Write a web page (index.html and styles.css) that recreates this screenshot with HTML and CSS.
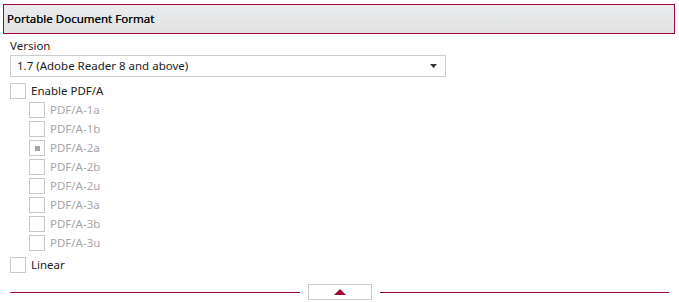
FILE: index.html
```html
<!DOCTYPE html>
<html lang="en">
<head>
    <meta charset="UTF-8">
    <meta name="viewport" content="width=device-width, initial-scale=1.0">
    <title>Portable Document Format</title>
    <link rel="stylesheet" href="styles.css">
</head>
<body>
    <section class="panel">
        <header class="panel-header">Portable Document Format</header>
        <div class="panel-body">
            <label class="field-label">Version</label>
            <div class="select">
                <span>1.7 (Adobe Reader 8 and above)</span>
                <svg class="select-arrow" width="7" height="4" viewBox="0 0 7 4"><path d="M0 0h7L3.5 4z" fill="#333"/></svg>
            </div>
            <div class="check">
                <span class="box"></span>
                <span>Enable PDF/A</span>
            </div>
            <div class="sub-checks">
                <div class="check disabled"><span class="box"></span><span>PDF/A-1a</span></div>
                <div class="check disabled"><span class="box"></span><span>PDF/A-1b</span></div>
                <div class="check disabled"><span class="box mixed"></span><span>PDF/A-2a</span></div>
                <div class="check disabled"><span class="box"></span><span>PDF/A-2b</span></div>
                <div class="check disabled"><span class="box"></span><span>PDF/A-2u</span></div>
                <div class="check disabled"><span class="box"></span><span>PDF/A-3a</span></div>
                <div class="check disabled"><span class="box"></span><span>PDF/A-3b</span></div>
                <div class="check disabled"><span class="box"></span><span>PDF/A-3u</span></div>
            </div>
            <div class="check linear">
                <span class="box"></span>
                <span>Linear</span>
            </div>
        </div>
        <footer class="panel-footer">
            <span class="rule"></span>
            <button class="collapse-button">
                <svg width="12" height="6" viewBox="0 0 12 6"><path d="M6 0L12 6H0z" fill="#a0052d"/></svg>
            </button>
            <span class="rule"></span>
        </footer>
    </section>
</body>
</html>
```
FILE: styles.css
```css
body {
    margin: 0;
    background-color: #ffffff;
    font-family: "Noto Sans", "Open Sans", sans-serif;
    font-size: 11.5px;
    line-height: 16px;
    color: #222222;
}

.panel {
    padding: 4px 4px 0 3px;
}

.panel-header {
    height: 28px;
    border: 1px solid #a0052d;
    background: linear-gradient(#e9ebed, #e2e2e2);
    display: flex;
    align-items: center;
    padding-left: 3px;
    font-size: 11.5px;
    color: #111111;
    text-shadow: 0 0 0.4px #111111;
}

.panel-body {
    display: flex;
    flex-direction: column;
    padding-left: 7px;
}

.field-label {
    margin-top: 4px;
}

.select {
    margin-top: 1px;
    height: 20px;
    width: 420px;
    border: 1px solid #cccccc;
    display: flex;
    align-items: center;
    justify-content: space-between;
    padding: 0 8px 0 6px;
}

.check {
    display: flex;
    align-items: center;
    gap: 5px;
    height: 16px;
    margin-top: 6px;
}

.box {
    width: 14px;
    height: 14px;
    border: 1px solid #c8c8c8;
    background: #fff;
    display: flex;
    align-items: center;
    justify-content: center;
}

.box.mixed::after {
    content: "";
    width: 5px;
    height: 5px;
    background: #a6a6a6;
}

.sub-checks {
    display: flex;
    flex-direction: column;
    gap: 3px;
    padding-left: 19px;
    margin-top: 3px;
}

.sub-checks .check {
    margin-top: 0;
}

.check.disabled {
    color: #a6a6a6;
}

.check.linear {
    margin-top: 6px;
}

.panel-footer {
    display: flex;
    align-items: center;
    margin: 11px 6px 0 7px;
    gap: 8px;
}

.rule {
    flex: 1;
    height: 1px;
    background: #a0052d;
}

.collapse-button {
    width: 64px;
    height: 16px;
    border: 1px solid #cccccc;
    background: #fff;
    padding: 0;
    display: flex;
    align-items: center;
    justify-content: center;
}
```
